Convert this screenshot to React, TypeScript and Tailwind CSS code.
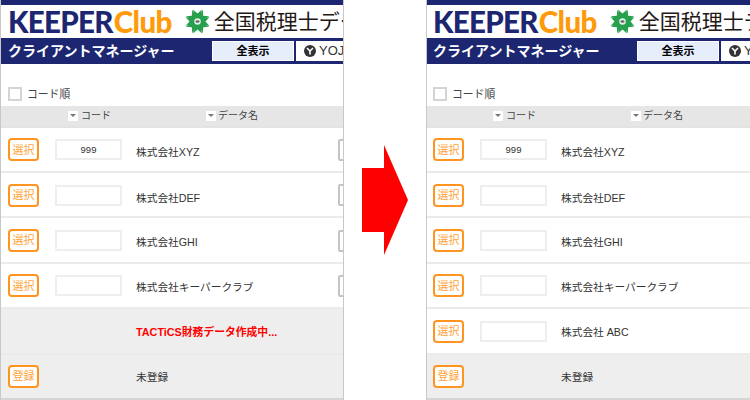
const FONT = "font-['Liberation_Sans','Noto_Sans_CJK_JP',sans-serif]";

type Row = {
    action?: string;
    code?: string;
    name?: string;
    gray?: boolean;
    red?: boolean;
    dy?: string;
};

const LEFT_ROWS: Row[] = [
    { action: "選択", code: "999", name: "株式会社XYZ", dy: "pt-[4px]" },
    { action: "選択", name: "株式会社DEF", dy: "pt-[5px]" },
    { action: "選択", name: "株式会社GHI", dy: "pt-[3px]" },
    { action: "選択", name: "株式会社キーパークラブ", dy: "pt-[2px]" },
    { name: "TACTiCS財務データ作成中...", gray: true, red: true, dy: "pt-[1px]" },
    { action: "登録", name: "未登録", gray: true },
];

const RIGHT_ROWS: Row[] = [
    { action: "選択", code: "999", name: "株式会社XYZ", dy: "pt-[4px]" },
    { action: "選択", name: "株式会社DEF", dy: "pt-[5px]" },
    { action: "選択", name: "株式会社GHI", dy: "pt-[3px]" },
    { action: "選択", name: "株式会社キーパークラブ", dy: "pt-[2px]" },
    { action: "選択", name: "株式会社 ABC", dy: "pt-[1px]" },
    { action: "登録", name: "未登録", gray: true },
];

function Emblem() {
    const arms = [0, 45, 90, 135, 180, 225, 270, 315];
    return (
        <svg width="25" height="25" viewBox="0 0 50 50" className="shrink-0">
            {arms.map((deg) => (
                <g key={deg} transform={`rotate(${deg} 25 25)`}>
                    <path d="M22 25 L16 1 L25 9 L34 1 L28 25 Z" fill="#27a04e" />
                </g>
            ))}
            <circle cx="25" cy="25" r="6.5" fill="#e4f3e8" />
            <ellipse cx="25" cy="25" rx="4" ry="2.5" fill="#666" />
        </svg>
    );
}

function SortArrow() {
    return (
        <span className="flex h-[10px] w-[10px] items-center justify-center bg-white">
            <span className="h-0 w-0 border-x-[3px] border-t-[3px] border-x-transparent border-t-[#777]" />
        </span>
    );
}

function Panel({ rows, clipped }: { rows: Row[]; clipped?: boolean }) {
    return (
        <div className={`h-full w-full overflow-hidden border-l border-[#c8c8c8] bg-white ${clipped ? "border-r" : ""}`}>
            <div className="h-[5px] bg-[#1d2671]" />
            <div className={`flex h-[33px] items-center whitespace-nowrap ${clipped ? "pl-[7px]" : "pl-[6px]"}`}>
                <span className="font-['Lato'] text-[29.5px] font-black leading-none tracking-[-0.7px] text-[#1d2671]">KEEPER</span>
                <span className="ml-[1px] font-['Lato'] text-[29.5px] font-black leading-none tracking-[-0.6px] text-[#ff9a0a]">Club</span>
                <span className="ml-[13px] flex"><Emblem /></span>
                <span className="ml-[4px] text-[21px] leading-none text-[#231815]">全国税理士データ</span>
            </div>
            <div className={`flex h-[26px] items-center whitespace-nowrap bg-[#1d2671] ${clipped ? "pl-[7px]" : "pl-[6px]"}`}>
                <span className="w-[204px] shrink-0 text-[14px] font-bold text-white">クライアントマネージャー</span>
                <span className="flex h-[20px] w-[82px] shrink-0 items-center justify-center border border-white bg-[#e6edfb] text-[11px] font-bold text-black">全表示</span>
                <span className="ml-[2px] flex h-[20px] w-[90px] shrink-0 items-center gap-[3px] bg-white pl-[8px] text-[13px] text-[#333]">
                    <span className="flex h-[12px] w-[12px] items-center justify-center rounded-full bg-[#333]">
                        <svg width="8" height="8" viewBox="0 0 8 8">
                            <path d="M1 1 L4 4 L7 1 M4 4 V7.5" stroke="#fff" strokeWidth="1.6" fill="none" />
                        </svg>
                    </span>
                    YOJ
                </span>
            </div>
            <div className="flex h-[42px] items-end">
                <label className={`mb-[4px] flex items-center gap-[5px] text-[10.8px] text-[#444] ${clipped ? "ml-[7px]" : "ml-[6px]"}`}>
                    <span className="h-[14px] w-[14px] border-2 border-[#d4d4d4] bg-white" />
                    コード順
                </label>
            </div>
            <div className={`flex h-[21.6px] items-center border-b-2 border-[#e3e3e3] bg-[#e6e6e6] text-[10px] text-[#444] ${clipped ? "pl-[67px]" : "pl-[66px]"}`}>
                <span className="flex w-[138px] items-center gap-[3px]"><SortArrow />コード</span>
                <span className="flex items-center gap-[2px]"><SortArrow />データ名</span>
            </div>
            {rows.map((row, i) => (
                <div
                    key={i}
                    className={`relative flex h-[45.4px] items-center border-b-2 pt-[1px] ${i === rows.length - 1 ? "border-[#d6d6d6]" : "border-[#ebebeb]"} ${row.gray ? "bg-[#eeeeee]" : "bg-white"}`}
                >
                    <div className={`shrink-0 ${clipped ? "ml-[7px] w-[47px]" : "ml-[6px] w-[47px]"}`}>
                        {row.action ? (
                            <span className="flex h-[23px] w-[31px] items-center justify-center rounded-[4px] border-2 border-[#ff9420] bg-white text-[11px] text-[#ffa33a]">
                                {row.action}
                            </span>
                        ) : null}
                    </div>
                    <div className={`flex h-[21px] w-[67px] shrink-0 items-center justify-center border-2 border-[#eeeeee] text-[9.5px] text-[#333] ${row.gray ? "border-[#ebebeb]" : "bg-white"}`}>
                        {row.code}
                    </div>
                    <div className={`ml-[14px] whitespace-nowrap ${row.dy ?? ""} ${row.red ? "text-[10.8px] font-bold text-[#ff0000]" : "text-[10.7px] text-[#333]"}`}>
                        {row.name}
                    </div>
                    {clipped && !row.gray ? (
                        <span className="absolute left-[337px] top-[11.5px] h-[22px] w-[20px] rounded-[2px] border-2 border-[#c4c4c4] bg-white" />
                    ) : null}
                </div>
            ))}
        </div>
    );
}

export default function App() {
    return (
        <div className={`flex h-[400px] w-[750px] overflow-hidden bg-white ${FONT}`}>
            <div className="h-[400px] w-[344px] shrink-0">
                <Panel rows={LEFT_ROWS} clipped />
            </div>
            <div className="flex w-[82px] shrink-0 items-center pl-[18px]">
                <svg width="46" height="110" viewBox="0 0 46 110">
                    <path d="M0 23 H22 V0 L46 55 L22 110 V87 H0 Z" fill="#ff0000" />
                </svg>
            </div>
            <div className="h-[400px] w-[324px] shrink-0">
                <Panel rows={RIGHT_ROWS} />
            </div>
        </div>
    );
}
